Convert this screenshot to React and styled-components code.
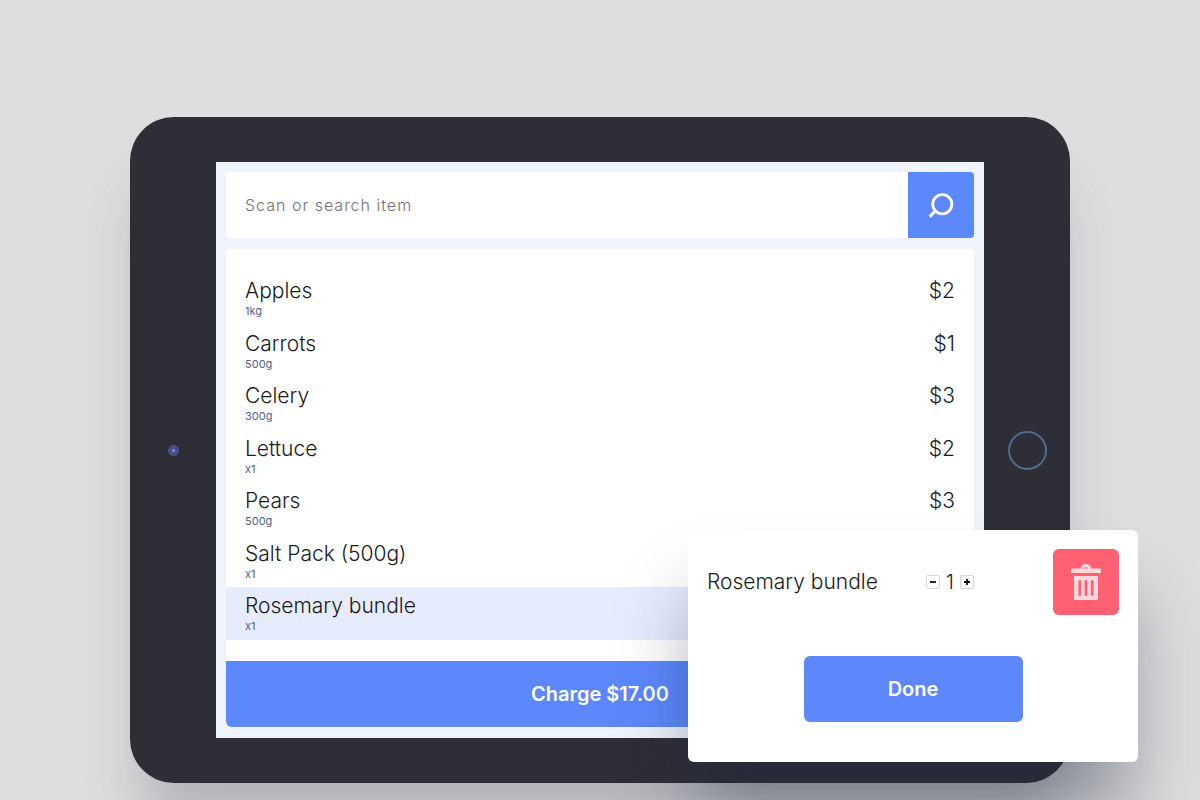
import React, { useState } from "react";
import styled, { createGlobalStyle } from "styled-components";

const GlobalStyle = createGlobalStyle`
  *, *::before, *::after { box-sizing: border-box; }
  body {
    margin: 0;
    background: #dedede;
    color: #191a22;
    font-family: Inter, "Liberation Sans", sans-serif;
    -webkit-font-smoothing: antialiased;
  }
  button, input { font: inherit; color: inherit; margin: 0; }
`;

const Page = styled.main`
  display: flex;
  justify-content: center;
  min-height: 100vh;
  padding: 117px 72px 17px;
  overflow: hidden;
`;

const Tablet = styled.div`
  position: relative;
  display: grid;
  grid-template-columns: 86px minmax(0, 1fr) 86px;
  align-items: center;
  justify-items: center;
  width: 100%;
  max-width: 940px;
  padding: 45px 0;
  border-radius: 44px;
  background: #2e2e37;
  box-shadow: 0 56px 60px -14px rgba(70, 76, 92, 0.3);
`;

const Camera = styled.span`
  width: 11px;
  height: 11px;
  border: 4px solid #4a4e88;
  border-radius: 50%;
  background: #6f8bff;
`;

const HomeButton = styled.button`
  width: 39px;
  height: 39px;
  padding: 0;
  border: 2px solid #506a90;
  border-radius: 50%;
  background: none;
`;

const Screen = styled.section`
  display: flex;
  flex-direction: column;
  gap: 11px;
  width: 100%;
  min-height: 576px;
  padding: 10px 10px 11px;
  background: #eff3fb;
`;

const SearchBar = styled.form`
  display: flex;
  height: 66px;
  border-radius: 4px;
  background: #fff;
  overflow: hidden;
`;

const SearchInput = styled.input`
  flex: 1;
  min-width: 0;
  padding: 0 19px;
  border: 0;
  outline: 0;
  background: transparent;
  font-size: 16px;
  font-weight: 300;
  letter-spacing: 1px;
  &::placeholder { color: #707075; opacity: 1; }
`;

const SearchButton = styled.button`
  display: flex;
  align-items: center;
  justify-content: center;
  width: 66px;
  padding: 0;
  border: 0;
  background: #5c88fc;
`;

const Basket = styled.div`
  flex: 1;
  display: flex;
  flex-direction: column;
  border-radius: 4px 4px 6px 6px;
  background: #fff;
  overflow: hidden;
`;

const ItemList = styled.ul`
  flex: 1;
  display: grid;
  grid-auto-rows: 1fr;
  margin: 0;
  padding: 23px 0 21px;
  list-style: none;
`;

const Item = styled.li`
  display: flex;
  justify-content: space-between;
  padding: 5px 19px 0;
  background: ${({ $selected }) => ($selected ? "#e6ecfe" : "transparent")};
`;

const ItemText = styled.span`
  font-size: 21px;
  font-weight: 300;
  line-height: 28px;
`;

const Quantity = styled.span`
  display: block;
  color: #506487;
  font-size: 11px;
  line-height: 12px;
`;

const PrimaryButton = styled.button`
  height: 66px;
  width: ${({ $width }) => $width || "100%"};
  padding: 0;
  border: 0;
  border-radius: ${({ $width }) => ($width ? "6px" : "0")};
  background: #5c88fc;
  color: #fff;
  font-size: 20px;
  font-weight: 600;
`;

const Popover = styled.section`
  position: absolute;
  right: -68px;
  bottom: 21px;
  display: flex;
  flex-direction: column;
  align-items: center;
  gap: 41px;
  width: 450px;
  padding: 19px 19px 40px;
  border-radius: 6px;
  background: #fff;
  box-shadow: 0 60px 70px -6px rgba(28, 40, 60, 0.38);
`;

const EditRow = styled.div`
  display: grid;
  grid-template-columns: 219px 1fr 66px;
  align-items: center;
  width: 100%;
`;

const Stepper = styled.div`
  display: flex;
  align-items: center;
  gap: 6px;
  font-size: 20px;
  font-weight: 300;
  line-height: 28px;
`;

const StepButton = styled.button`
  display: flex;
  align-items: center;
  justify-content: center;
  width: 14px;
  height: 14px;
  padding: 0;
  border: 1px solid #d4d5de;
  border-radius: 2px;
  background: #fff;
`;

const DeleteButton = styled.button`
  display: flex;
  align-items: center;
  justify-content: center;
  width: 66px;
  height: 66px;
  padding: 0;
  border: 0;
  border-radius: 6px;
  background: #ff6072;
`;

const SearchIcon = () => (
  <svg width="26" height="26" viewBox="0 0 26 26" fill="none" stroke="#fff" aria-hidden="true">
    <circle cx="14.3" cy="12.3" r="9.6" strokeWidth="2.8" />
    <path d="M7.8 18.6 1.6 24.6" strokeWidth="3.2" />
  </svg>
);

const TrashIcon = () => (
  <svg width="30" height="36" viewBox="0 0 30 36" aria-hidden="true">
    <path
      fill="#ffd9de"
      fillRule="evenodd"
      d="M0 5.5Q0 4.5 1 4.5H9.5C10.2 1.8 12.2 0 15 0s4.8 1.8 5.5 4.5H29Q30 4.5 30 5.5V9H0ZM12.7 4.5H17.3C16.8 3.6 16 3.2 15 3.2s-1.8.4-2.3 1.3ZM3 12H27V35Q27 36 26 36H4Q3 36 3 35ZM7.4 16.2V31.8H10.2V16.2ZM13.6 16.2V31.8H16.4V16.2ZM19.8 16.2V31.8H22.6V16.2Z"
    />
  </svg>
);

const StepIcon = ({ plus }) => (
  <svg width="8" height="8" viewBox="0 0 8 8" stroke="#111116" strokeWidth="1.8" aria-hidden="true">
    <path d={plus ? "M1 4H7M4 1V7" : "M1 4H7"} />
  </svg>
);

const items = [
  { name: "Apples", quantity: "1kg", price: "$2" },
  { name: "Carrots", quantity: "500g", price: "$1" },
  { name: "Celery", quantity: "300g", price: "$3" },
  { name: "Lettuce", quantity: "x1", price: "$2" },
  { name: "Pears", quantity: "500g", price: "$3" },
  { name: "Salt Pack (500g)", quantity: "x1" },
  { name: "Rosemary bundle", quantity: "x1", selected: true },
];

export default function App() {
  const [count, setCount] = useState(1);
  return (
    <>
      <GlobalStyle />
      <Page>
        <Tablet>
          <Camera />
          <Screen>
            <SearchBar role="search" onSubmit={(e) => e.preventDefault()}>
              <SearchInput type="text" aria-label="Scan or search item" placeholder="Scan or search item" />
              <SearchButton type="submit" aria-label="Search">
                <SearchIcon />
              </SearchButton>
            </SearchBar>
            <Basket>
              <ItemList>
                {items.map((item) => (
                  <Item key={item.name} $selected={item.selected}>
                    <div>
                      <ItemText>{item.name}</ItemText>
                      <Quantity>{item.quantity}</Quantity>
                    </div>
                    {item.price && <ItemText>{item.price}</ItemText>}
                  </Item>
                ))}
              </ItemList>
              <PrimaryButton type="button">Charge $17.00</PrimaryButton>
            </Basket>
          </Screen>
          <HomeButton type="button" aria-label="Home" />
          <Popover aria-label="Edit item">
            <EditRow>
              <ItemText>Rosemary bundle</ItemText>
              <Stepper>
                <StepButton type="button" aria-label="Decrease" onClick={() => setCount(Math.max(0, count - 1))}>
                  <StepIcon />
                </StepButton>
                <span>{count}</span>
                <StepButton type="button" aria-label="Increase" onClick={() => setCount(count + 1)}>
                  <StepIcon plus />
                </StepButton>
              </Stepper>
              <DeleteButton type="button" aria-label="Remove item">
                <TrashIcon />
              </DeleteButton>
            </EditRow>
            <PrimaryButton type="button" $width="219px">Done</PrimaryButton>
          </Popover>
        </Tablet>
      </Page>
    </>
  );
}
